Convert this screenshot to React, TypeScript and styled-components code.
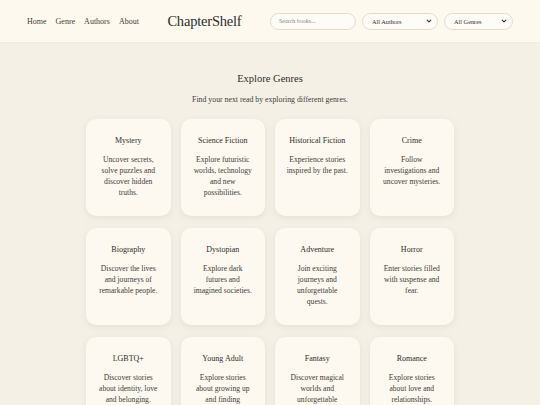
import React from "react";
import styled, { createGlobalStyle } from "styled-components";

const Global = createGlobalStyle`
  html, body { margin: 0; padding: 0; }
  body {
    background: #f4f0e6;
    font-family: "Liberation Serif", "DejaVu Serif", serif;
    color: #3f3c39;
    -webkit-font-smoothing: antialiased;
  }
`;

const Header = styled.header`
  height: 42px;
  background: #fdf9ef;
  display: flex;
  align-items: center;
  justify-content: space-between;
  padding: 0 27px;
  box-sizing: border-box;
  box-shadow: 0 1px 3px rgba(0, 0, 0, 0.04);
`;

const Nav = styled.nav`
  display: flex;
  gap: 9px;
`;

const NavLink = styled.a`
  font-size: 8px;
  color: #3f3c39;
  text-decoration: none;
`;

const Logo = styled.div`
  font-size: 14.5px;
  color: #2f2c2a;
  letter-spacing: -0.2px;
`;

const Controls = styled.div`
  display: flex;
  gap: 6px;
  align-items: center;
`;

const Search = styled.input`
  width: 86px;
  height: 17px;
  box-sizing: border-box;
  border: 1px solid #e3dccd;
  border-radius: 9px;
  background: #fefcf7;
  font-family: inherit;
  font-size: 6px;
  padding: 0 8px;
  color: #3f3c39;
  outline: none;
  &::placeholder { color: #8a857e; }
`;

const Select = styled.div<{ $w: number }>`
  width: ${(p) => p.$w}px;
  height: 17px;
  box-sizing: border-box;
  border: 1px solid #e3dccd;
  border-radius: 9px;
  background: #fefcf7;
  font-size: 6.3px;
  display: flex;
  align-items: center;
  justify-content: space-between;
  padding: 0 5px 0 9px;
  color: #2f2c2a;
`;

const Main = styled.main`
  display: flex;
  flex-direction: column;
  align-items: center;
  padding-top: 31px;
`;

const Title = styled.h1`
  font-size: 10.5px;
  font-weight: 400;
  margin: 0;
  color: #2f2c2a;
`;

const Subtitle = styled.p`
  font-size: 7.8px;
  margin: 11px 0 0;
  color: #3f3c39;
`;

const Grid = styled.div`
  display: grid;
  grid-template-columns: repeat(4, 84.5px);
  column-gap: 10px;
  row-gap: 12px;
  margin-top: 15px;
`;

const Card = styled.div`
  height: 97px;
  background: #fdf9f0;
  border-radius: 10px;
  box-shadow: 0 2px 6px rgba(120, 100, 70, 0.1);
  padding: 17px 6px 0;
  box-sizing: border-box;
  text-align: center;
`;

const CardTitle = styled.h2`
  font-size: 8px;
  font-weight: 400;
  margin: 0;
  color: #2f2c2a;
`;

const CardText = styled.p`
  font-size: 7.6px;
  line-height: 11px;
  margin: 9px 0 0;
  color: #3f3c39;
`;

const Line = styled.span`
  display: block;
  white-space: nowrap;
`;

const genres: [string, string[]][] = [
  ["Mystery", ["Uncover secrets,", "solve puzzles and", "discover hidden", "truths."]],
  ["Science Fiction", ["Explore futuristic", "worlds, technology", "and new", "possibilities."]],
  ["Historical Fiction", ["Experience stories", "inspired by the past."]],
  ["Crime", ["Follow", "investigations and", "uncover mysteries."]],
  ["Biography", ["Discover the lives", "and journeys of", "remarkable people."]],
  ["Dystopian", ["Explore dark", "futures and", "imagined societies."]],
  ["Adventure", ["Join exciting", "journeys and", "unforgettable", "quests."]],
  ["Horror", ["Enter stories filled", "with suspense and", "fear."]],
  ["LGBTQ+", ["Discover stories", "about identity, love", "and belonging."]],
  ["Young Adult", ["Explore stories", "about growing up", "and finding", "yourself."]],
  ["Fantasy", ["Discover magical", "worlds and", "unforgettable", "adventures."]],
  ["Romance", ["Explore stories", "about love and", "relationships."]],
];

const Chevron = () => (
  <svg width="6" height="6" viewBox="0 0 10 10">
    <path d="M2 3.5 L5 6.5 L8 3.5" fill="none" stroke="#333" strokeWidth="1.8" strokeLinecap="round" strokeLinejoin="round" />
  </svg>
);

export default function App() {
  return (
    <>
      <Global />
      <Header>
        <Nav>
          <NavLink href="#">Home</NavLink>
          <NavLink href="#">Genre</NavLink>
          <NavLink href="#">Authors</NavLink>
          <NavLink href="#">About</NavLink>
        </Nav>
        <Logo>ChapterShelf</Logo>
        <Controls>
          <Search placeholder="Search books..." />
          <Select $w={76}>
            <span>All Authors</span>
            <Chevron />
          </Select>
          <Select $w={69}>
            <span>All Genres</span>
            <Chevron />
          </Select>
        </Controls>
      </Header>
      <Main>
        <Title>Explore Genres</Title>
        <Subtitle>Find your next read by exploring different genres.</Subtitle>
        <Grid>
          {genres.map(([t, lines]) => (
            <Card key={t}>
              <CardTitle>{t}</CardTitle>
              <CardText>
                {lines.map((l) => (
                  <Line key={l}>{l}</Line>
                ))}
              </CardText>
            </Card>
          ))}
        </Grid>
      </Main>
    </>
  );
}
